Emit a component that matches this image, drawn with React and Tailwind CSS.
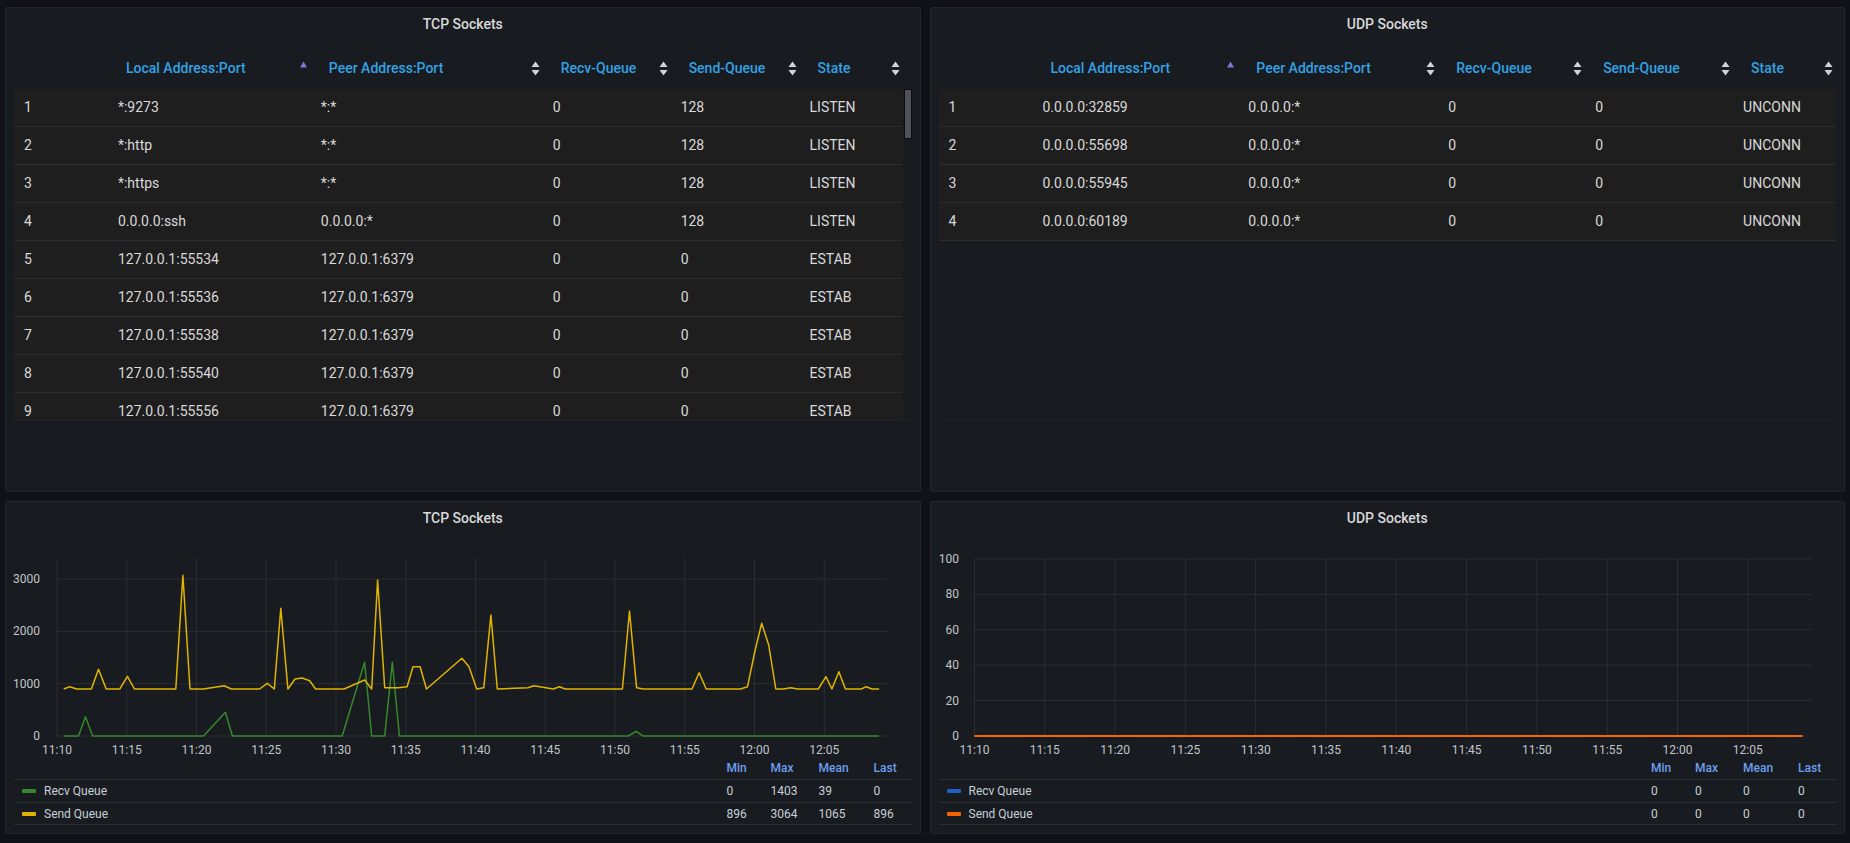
import React from "react";

// --- data ---
const TCP_COLS = [
  { key: "idx", w: "w-[94px]", label: "" },
  { key: "local", w: "w-[203px]", label: "Local Address:Port", active: true },
  { key: "peer", w: "w-[232px]", label: "Peer Address:Port" },
  { key: "recv", w: "w-[128px]", label: "Recv-Queue" },
  { key: "send", w: "w-[129px]", label: "Send-Queue" },
  { key: "state", w: "w-[103px]", label: "State" },
];

const UDP_COLS = [
  { key: "idx", w: "w-[94px]", label: "" },
  { key: "local", w: "w-[206px]", label: "Local Address:Port", active: true },
  { key: "peer", w: "w-[200px]", label: "Peer Address:Port" },
  { key: "recv", w: "w-[147px]", label: "Recv-Queue" },
  { key: "send", w: "w-[148px]", label: "Send-Queue" },
  { key: "state", w: "w-[103px]", label: "State" },
];

const TCP_ROWS = [
  ["1", "*:9273", "*:*", "0", "128", "LISTEN"],
  ["2", "*:http", "*:*", "0", "128", "LISTEN"],
  ["3", "*:https", "*:*", "0", "128", "LISTEN"],
  ["4", "0.0.0.0:ssh", "0.0.0.0:*", "0", "128", "LISTEN"],
  ["5", "127.0.0.1:55534", "127.0.0.1:6379", "0", "0", "ESTAB"],
  ["6", "127.0.0.1:55536", "127.0.0.1:6379", "0", "0", "ESTAB"],
  ["7", "127.0.0.1:55538", "127.0.0.1:6379", "0", "0", "ESTAB"],
  ["8", "127.0.0.1:55540", "127.0.0.1:6379", "0", "0", "ESTAB"],
  ["9", "127.0.0.1:55556", "127.0.0.1:6379", "0", "0", "ESTAB"],
];

const UDP_ROWS = [
  ["1", "0.0.0.0:32859", "0.0.0.0:*", "0", "0", "UNCONN"],
  ["2", "0.0.0.0:55698", "0.0.0.0:*", "0", "0", "UNCONN"],
  ["3", "0.0.0.0:55945", "0.0.0.0:*", "0", "0", "UNCONN"],
  ["4", "0.0.0.0:60189", "0.0.0.0:*", "0", "0", "UNCONN"],
];

const TIMES = ["11:10", "11:15", "11:20", "11:25", "11:30", "11:35", "11:40", "11:45", "11:50", "11:55", "12:00", "12:05"];

// traced points (measured on a 1.695x / 3x scale)
const SEND_RAW = [
  [108, 597], [118, 590], [130, 597], [155, 597], [167, 538], [180, 597], [203, 597], [216, 559], [228, 597],
  [298, 597], [310, 256], [322, 597], [345, 597], [380, 587], [392, 597], [440, 597], [453, 580], [465, 597],
  [476, 355], [488, 597], [500, 567], [512, 564], [525, 572], [535, 597], [583, 597], [618, 570], [630, 597],
  [640, 270], [652, 593], [675, 593], [690, 590], [700, 530], [712, 530], [723, 597], [783, 505], [795, 530],
  [808, 597], [820, 593], [832, 375], [843, 597], [895, 593], [905, 587], [915, 590], [938, 597], [948, 590],
  [958, 597], [1055, 597], [1067, 363], [1079, 593], [1090, 597], [1173, 597], [1185, 548], [1197, 597],
  [1255, 597], [1267, 590], [1280, 480], [1291, 400], [1303, 465], [1315, 597], [1328, 597], [1340, 593],
  [1352, 597], [1387, 597], [1400, 560], [1410, 597], [1422, 545], [1433, 597], [1460, 597], [1468, 590],
  [1478, 597], [1490, 597],
];

const RECV_RAW = [
  [108, 738], [133, 738], [145, 680], [157, 738], [345, 738], [382, 667], [394, 738], [580, 738], [618, 517],
  [630, 738], [652, 738], [665, 517], [677, 738], [1065, 738], [1078, 724], [1090, 738], [1490, 738],
];

const toPts = (raw) =>
  raw.map(([x, y]) => `${(x / 1.695 - 6).toFixed(1)},${(y / 3 - 45).toFixed(1)}`).join(" ");

// --- pieces ---
function SortIcon({ active }) {
  if (active) {
    return (
      <svg width="9" height="15" viewBox="0 0 9 15" className="shrink-0">
        <path d="M1 6.5 L4.5 0.5 L8 6.5 Z" fill="#7b79d6" />
      </svg>
    );
  }
  return (
    <svg width="9" height="15" viewBox="0 0 9 15" className="shrink-0">
      <path d="M0.5 6 L4.5 0.5 L8.5 6 Z M0.5 9 L4.5 14.5 L8.5 9 Z" fill="#d2d3d5" />
    </svg>
  );
}

function Panel({ title, children }) {
  return (
    <div className="flex flex-col bg-[#181b1f] border border-[#22252a] rounded-[2px] overflow-hidden">
      <div className="h-[33px] shrink-0 flex items-center justify-center text-[14px] font-medium text-[#d8d9da]">
        {title}
      </div>
      {children}
    </div>
  );
}

function SocketTable({ cols, rows, scroll }) {
  return (
    <div className="px-[8px]">
      <div className={"flex h-[48px] pt-[6px] " + (scroll ? "pr-[9px]" : "")}>
        {cols.map((c) => (
          <div key={c.key} className={c.w + " flex items-center justify-between pl-[18px] pr-[3px]"}>
            <span className="text-[14px] font-medium text-[#33a2e5]">{c.label}</span>
            {c.label && <SortIcon active={c.active} />}
          </div>
        ))}
      </div>
      <div className={"relative h-[332px] overflow-hidden border-b border-[#202226] " + (scroll ? "pr-[9px]" : "")}>
        {rows.map((r) => (
          <div key={r[0]} className="flex h-[38px] bg-[#1f1e1f] border-b border-[#2c2c2e]">
            {r.map((v, i) => (
              <div key={i} className={cols[i].w + " flex items-center pl-[10px] text-[14px] text-[#d8d9da]"}>
                {v}
              </div>
            ))}
          </div>
        ))}
        {scroll && (
          <div className="absolute right-0 top-0 w-[8px] h-[50px] bg-[#4f5159] border border-[#0c0d0f]" />
        )}
      </div>
    </div>
  );
}

function TcpChart() {
  const vx = TIMES.map((_, k) => 51 + 69.75 * k);
  const hy = [0, 1000, 2000, 3000].map((v) => 201 - (52.3 * v) / 1000);
  return (
    <svg width="913" height="222" className="shrink-0">
      {vx.map((x) => (
        <line key={x} x1={x} x2={x} y1="24" y2="201" stroke="#2a2d32" strokeWidth="1" />
      ))}
      {hy.map((y) => (
        <line key={y} x1="51" x2="881" y1={y} y2={y} stroke="#2a2d32" strokeWidth="1" />
      ))}
      {["0", "1000", "2000", "3000"].map((t, i) => (
        <text key={t} x="34" y={hy[i] + 4} textAnchor="end" fontSize="12" fill="#c1c5cb" fontFamily="Roboto, sans-serif">
          {t}
        </text>
      ))}
      {TIMES.map((t, k) => (
        <text key={t} x={vx[k]} y="219" textAnchor="middle" fontSize="12" fill="#c1c5cb" fontFamily="Roboto, sans-serif">
          {t}
        </text>
      ))}
      <polyline points={toPts(RECV_RAW)} fill="none" stroke="#37872d" strokeWidth="1.5" strokeLinejoin="round" />
      <polyline points={toPts(SEND_RAW)} fill="none" stroke="#e0b400" strokeWidth="1.5" strokeLinejoin="round" />
    </svg>
  );
}

function UdpChart() {
  const vx = TIMES.map((_, k) => 43.5 + 70.3 * k);
  const hy = [0, 1, 2, 3, 4, 5].map((j) => 201 - 35.4 * j);
  return (
    <svg width="913" height="222" className="shrink-0">
      {vx.map((x) => (
        <line key={x} x1={x} x2={x} y1="24" y2="201" stroke="#2a2d32" strokeWidth="1" />
      ))}
      {hy.map((y) => (
        <line key={y} x1="43.5" x2="881" y1={y} y2={y} stroke="#2a2d32" strokeWidth="1" />
      ))}
      {["0", "20", "40", "60", "80", "100"].map((t, i) => (
        <text key={t} x="28" y={hy[i] + 4} textAnchor="end" fontSize="12" fill="#c1c5cb" fontFamily="Roboto, sans-serif">
          {t}
        </text>
      ))}
      {TIMES.map((t, k) => (
        <text key={t} x={vx[k]} y="219" textAnchor="middle" fontSize="12" fill="#c1c5cb" fontFamily="Roboto, sans-serif">
          {t}
        </text>
      ))}
      <line x1="43.5" x2="871.5" y1="201" y2="201" stroke="#1f60c4" strokeWidth="2" />
      <line x1="43.5" x2="871.5" y1="201" y2="201" stroke="#fa6400" strokeWidth="2" />
    </svg>
  );
}

function Legend({ items }) {
  return (
    <div className="ml-[8px] mr-[7px] text-[12px]">
      <div className="flex h-[22px] items-center text-[#6e9ef0] font-medium">
        <div className="flex-1" />
        <div className="w-[44px]">Min</div>
        <div className="w-[48px]">Max</div>
        <div className="w-[55px]">Mean</div>
        <div className="w-[39px]">Last</div>
      </div>
      {items.map((it, i) => (
        <div
          key={it.name}
          className={"flex h-[23px] items-center border-t border-[#2a2d32] text-[#c7d0d9] " + (i === items.length - 1 ? "border-b" : "")}
        >
          <div className="flex-1 flex items-center">
            <span className={"ml-[8px] w-[14px] h-[4px] rounded-[1px] " + it.color} />
            <span className="ml-[8px]">{it.name}</span>
          </div>
          {it.vals.map((v, k) => (
            <div key={k} className={["w-[44px]", "w-[48px]", "w-[55px]", "w-[39px]"][k]}>
              {v}
            </div>
          ))}
        </div>
      ))}
    </div>
  );
}

export default function App() {
  return (
    <div className="w-[1850px] h-[843px] bg-[#111217] px-[5px] pt-[7px] grid grid-cols-2 grid-rows-[485px_333px] gap-[9px] font-['Roboto',sans-serif] overflow-hidden">
      <Panel title="TCP Sockets">
        <SocketTable cols={TCP_COLS} rows={TCP_ROWS} scroll />
      </Panel>
      <Panel title="UDP Sockets">
        <SocketTable cols={UDP_COLS} rows={UDP_ROWS} />
      </Panel>
      <Panel title="TCP Sockets">
        <TcpChart />
        <Legend
          items={[
            { name: "Recv Queue", color: "bg-[#37872d]", vals: ["0", "1403", "39", "0"] },
            { name: "Send Queue", color: "bg-[#e0b400]", vals: ["896", "3064", "1065", "896"] },
          ]}
        />
      </Panel>
      <Panel title="UDP Sockets">
        <UdpChart />
        <Legend
          items={[
            { name: "Recv Queue", color: "bg-[#1f60c4]", vals: ["0", "0", "0", "0"] },
            { name: "Send Queue", color: "bg-[#fa6400]", vals: ["0", "0", "0", "0"] },
          ]}
        />
      </Panel>
    </div>
  );
}
